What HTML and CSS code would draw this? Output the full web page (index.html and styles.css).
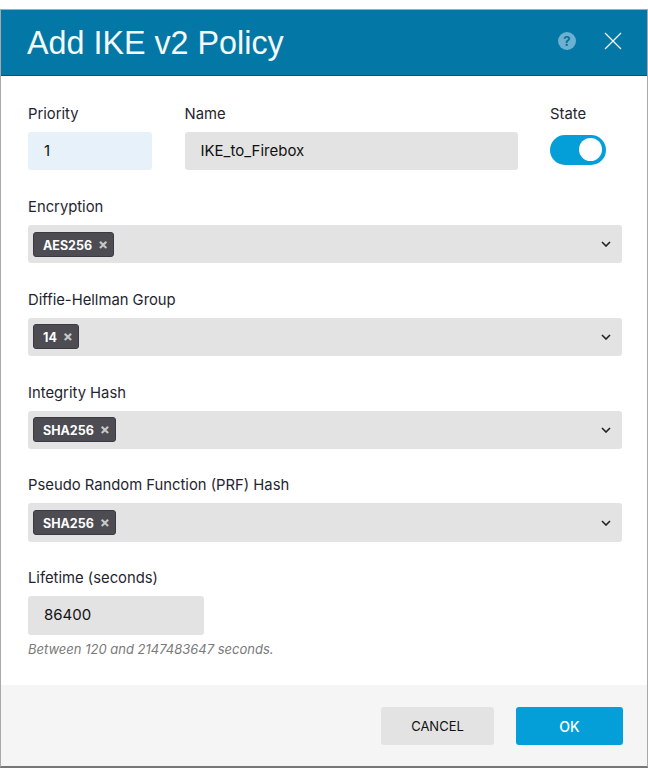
FILE: index.html
```html
<!DOCTYPE html>
<html lang="en">
  <head>
    <meta charset="UTF-8" />
    <title>Add IKE v2 Policy</title>
    <link rel="stylesheet" href="styles.css">
  </head>
  <body>
    <div class="dialog">
      <!-- Header -->
      <div class="dialog-header">
        <h1>Add IKE v2 Policy</h1>
        <div class="header-icons">
          <span class="help-icon">?</span>
          <svg class="close-icon" width="18" height="18" viewBox="0 0 18 18">
            <path d="M1 1L17 17M17 1L1 17" stroke="#fff" stroke-width="1.2" fill="none" />
          </svg>
        </div>
      </div>

      <!-- Form -->
      <div class="dialog-body">
        <div class="top-row">
          <div class="priority-col">
            <label>Priority</label>
            <div class="input input-active">1</div>
          </div>
          <div class="name-col">
            <label>Name</label>
            <div class="input">IKE_to_Firebox</div>
          </div>
          <div class="state-col">
            <label>State</label>
            <div class="toggle"><span class="toggle-knob"></span></div>
          </div>
        </div>

        <div class="field">
          <label>Encryption</label>
          <div class="select">
            <span class="tag">AES256<span class="tag-x">&#215;</span></span>
            <svg class="chevron" width="10" height="6" viewBox="0 0 10 6">
              <path d="M1 1L5 5L9 1" stroke="#222" stroke-width="1.6" fill="none" />
            </svg>
          </div>
        </div>

        <div class="field">
          <label>Diffie-Hellman Group</label>
          <div class="select">
            <span class="tag">14<span class="tag-x">&#215;</span></span>
            <svg class="chevron" width="10" height="6" viewBox="0 0 10 6">
              <path d="M1 1L5 5L9 1" stroke="#222" stroke-width="1.6" fill="none" />
            </svg>
          </div>
        </div>

        <div class="field">
          <label>Integrity Hash</label>
          <div class="select">
            <span class="tag">SHA256<span class="tag-x">&#215;</span></span>
            <svg class="chevron" width="10" height="6" viewBox="0 0 10 6">
              <path d="M1 1L5 5L9 1" stroke="#222" stroke-width="1.6" fill="none" />
            </svg>
          </div>
        </div>

        <div class="field">
          <label>Pseudo Random Function (PRF) Hash</label>
          <div class="select">
            <span class="tag">SHA256<span class="tag-x">&#215;</span></span>
            <svg class="chevron" width="10" height="6" viewBox="0 0 10 6">
              <path d="M1 1L5 5L9 1" stroke="#222" stroke-width="1.6" fill="none" />
            </svg>
          </div>
        </div>

        <div class="field">
          <label>Lifetime (seconds)</label>
          <div class="input lifetime">86400</div>
          <div class="help-text">Between 120 and 2147483647 seconds.</div>
        </div>
      </div>

      <!-- Footer -->
      <div class="dialog-footer">
        <button class="btn btn-cancel">CANCEL</button>
        <button class="btn btn-ok">OK</button>
      </div>
    </div>
  </body>
</html>
```

FILE: styles.css
```css
body {
  font-family: Inter, "Liberation Sans", sans-serif;
  margin: 0;
  padding: 9px 0 0;
  background-color: #fff;
  color: #1f2530;
}
.dialog {
  width: 648px;
  height: 759px;
  box-sizing: border-box;
  border: 1px solid #a9a9a9;
  border-bottom: 2px solid #777;
  display: flex;
  flex-direction: column;
}
.dialog-header {
  height: 66px;
  box-sizing: border-box;
  background-color: #0378a6;
  border-bottom: 1px solid #06528f;
  display: flex;
  justify-content: space-between;
  align-items: center;
  padding: 0 25px 0 26px;
}
.dialog-header h1 {
  margin: 1px 0 0;
  font-family: "Liberation Sans", sans-serif;
  font-size: 32.3px;
  font-weight: 400;
  color: #f4f9fb;
}
.header-icons {
  display: flex;
  align-items: center;
  gap: 28px;
  margin-bottom: 3px;
}
.help-icon {
  width: 18px;
  height: 18px;
  border-radius: 50%;
  background-color: #6cb1cf;
  color: #0a6f9b;
  font-size: 13px;
  font-weight: 700;
  line-height: 18px;
  text-align: center;
}
.close-icon {
  display: block;
}
.dialog-body {
  flex: 1;
  padding: 28px 25px 0 27px;
}
label {
  display: block;
  height: 20px;
  line-height: 20px;
  font-size: 14.8px;
  margin-bottom: 8px;
}
.top-row {
  display: flex;
  padding-bottom: 0.6px;
}
.priority-col {
  width: 124px;
  margin-right: 32.5px;
}
.name-col {
  width: 333.5px;
  margin-right: 32px;
}
.input {
  height: 38px;
  line-height: 37px;
  box-sizing: border-box;
  padding-left: 16px;
  font-size: 15px;
  color: #111;
  background-color: #e3e3e3;
  border-radius: 3px;
}
.input-active {
  background-color: #e6f1fa;
}
.lifetime {
  width: 176px;
  height: 39px;
}
.toggle {
  width: 56px;
  height: 30px;
  margin-top: 11px;
  box-sizing: border-box;
  padding: 3px;
  border-radius: 15px;
  background-color: #049fd9;
  display: flex;
  justify-content: flex-end;
}
.toggle-knob {
  width: 23px;
  height: 23px;
  margin: 0 1px;
  border-radius: 50%;
  background-color: #fff;
}
.field {
  margin-top: 26.4px;
}
.select {
  height: 38.4px;
  box-sizing: border-box;
  padding: 0 11px 0 5px;
  background-color: #e3e3e3;
  border-radius: 3px;
  display: flex;
  justify-content: space-between;
  align-items: center;
}
.tag {
  height: 25px;
  line-height: 23px;
  box-sizing: border-box;
  padding: 0 5px 0 9px;
  background-color: #4c4c52;
  border: 1px solid #3a3a40;
  border-radius: 3px;
  color: #fff;
  font-size: 12.5px;
  font-weight: 700;
  white-space: pre;
}
.tag-x {
  color: #c9c9c9;
  font-size: 15px;
  margin-left: 6px;
}
.chevron {
  display: block;
}
.help-text {
  margin-top: 6px;
  font-size: 13px;
  font-style: italic;
  color: #7a7a7a;
}
.dialog-footer {
  height: 81px;
  box-sizing: border-box;
  background-color: #f5f5f5;
  display: flex;
  justify-content: flex-end;
  padding: 22px 24px 0 0;
  gap: 22px;
}
.btn {
  height: 38px;
  border: none;
  border-radius: 3px;
  font-family: inherit;
  font-size: 13px;
  cursor: pointer;
}
.btn-cancel {
  width: 113px;
  background-color: #e3e3e3;
  color: #111;
}
.btn-ok {
  width: 107px;
  background-color: #049fd9;
  color: #fff;
  font-weight: 500;
  font-size: 14px;
}
```
